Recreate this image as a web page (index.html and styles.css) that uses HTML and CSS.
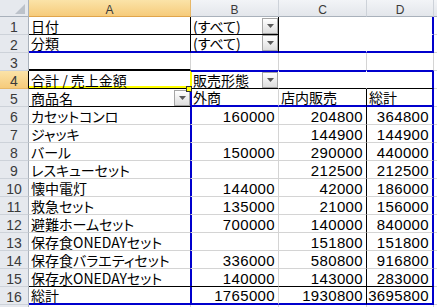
FILE: index.html
```html
<!DOCTYPE html>
<html lang="ja">
<head>
<meta charset="utf-8">
<title>ピボットテーブル</title>
<link rel="stylesheet" href="styles.css">
</head>
<body>
<div class="sheet">
  <div class="corner"><svg width="10" height="10" viewBox="0 0 10 10"><polygon points="10,0 10,10 0,10" fill="#bcc2ca"/></svg></div>
  <div class="ch sel">A</div><div class="ch">B</div><div class="ch">C</div><div class="ch">D</div><div class="ch"></div>

  <div class="rh">1</div>
  <div class="c kb kr">日付</div>
  <div class="c kb kr ddc">(すべて)<span class="dd"><svg width="7" height="4" viewBox="0 0 7 4"><polygon points="0,0 7,0 3.5,4" fill="#5a5a5a"/></svg></span></div>
  <div class="c wb wr"></div><div class="c wb br"></div><div class="c"></div>

  <div class="rh">2</div>
  <div class="c bb kr">分類</div>
  <div class="c bb kr ddc">(すべて)<span class="dd"><svg width="7" height="4" viewBox="0 0 7 4"><polygon points="0,0 7,0 3.5,4" fill="#5a5a5a"/></svg></span></div>
  <div class="c bb wr"></div><div class="c bb br"></div><div class="c"></div>

  <div class="rh">3</div>
  <div class="c kb2"></div><div class="c bb1"></div><div class="c bb1"></div><div class="c bb1"></div><div class="c"></div>

  <div class="rh sel">4</div>
  <div class="c act">合計 / 売上金額<span class="handle"></span></div>
  <div class="c kb wr it ily ddc">販売形態<span class="dd"><svg width="7" height="4" viewBox="0 0 7 4"><polygon points="0,0 7,0 3.5,4" fill="#5a5a5a"/></svg></span></div>
  <div class="c kb wr it"></div><div class="c kb br it"></div><div class="c"></div>

  <div class="rh">5</div>
  <div class="c kb br1 ddc">商品名<span class="dd"><svg width="7" height="4" viewBox="0 0 7 4"><polygon points="0,0 7,0 3.5,4" fill="#5a5a5a"/></svg></span></div>
  <div class="c bb il">外商</div><div class="c bb kr">店内販売</div><div class="c bb br">総計</div><div class="c"></div>

  <div class="rh">6</div>
  <div class="c br1">カセットコンロ</div><div class="c num il">160000</div><div class="c num kr">204800</div><div class="c num br">364800</div><div class="c"></div>
  <div class="rh">7</div>
  <div class="c br1">ジャッキ</div><div class="c num il"></div><div class="c num kr">144900</div><div class="c num br">144900</div><div class="c"></div>
  <div class="rh">8</div>
  <div class="c br1">バール</div><div class="c num il">150000</div><div class="c num kr">290000</div><div class="c num br">440000</div><div class="c"></div>
  <div class="rh">9</div>
  <div class="c br1">レスキューセット</div><div class="c num il"></div><div class="c num kr">212500</div><div class="c num br">212500</div><div class="c"></div>
  <div class="rh">10</div>
  <div class="c br1">懐中電灯</div><div class="c num il">144000</div><div class="c num kr">42000</div><div class="c num br">186000</div><div class="c"></div>
  <div class="rh">11</div>
  <div class="c br1">救急セット</div><div class="c num il">135000</div><div class="c num kr">21000</div><div class="c num br">156000</div><div class="c"></div>
  <div class="rh">12</div>
  <div class="c br1">避難ホームセット</div><div class="c num il">700000</div><div class="c num kr">140000</div><div class="c num br">840000</div><div class="c"></div>
  <div class="rh">13</div>
  <div class="c br1">保存食ONEDAYセット</div><div class="c num il"></div><div class="c num kr">151800</div><div class="c num br">151800</div><div class="c"></div>
  <div class="rh">14</div>
  <div class="c br1">保存食バラエティセット</div><div class="c num il">336000</div><div class="c num kr">580800</div><div class="c num br">916800</div><div class="c"></div>
  <div class="rh">15</div>
  <div class="c br1 kb">保存水ONEDAYセット</div><div class="c num il kb">140000</div><div class="c num kr kb">143000</div><div class="c num br kb">283000</div><div class="c"></div>
  <div class="rh">16</div>
  <div class="c br1 bb">総計</div><div class="c num il bb">1765000</div><div class="c num kr bb">1930800</div><div class="c num br bb">3695800</div><div class="c"></div>
  <div class="rh"></div>
  <div class="c"></div><div class="c"></div><div class="c"></div><div class="c"></div><div class="c"></div>
</div>
</body>
</html>
```
FILE: styles.css
```css
html, body {
  margin: 0;
  padding: 0;
  background: #fff;
  overflow: hidden;
}

body {
  font-family: "Noto Sans CJK JP", "Noto Sans", sans-serif;
  color: #000;
}

.sheet {
  width: 437px;
  height: 307px;
  overflow: hidden;
  display: grid;
  grid-template-columns: 29px 162px 88px 88px 67px 88px;
  grid-template-rows: 17px repeat(17, 18px);
}

/* headers */
.corner {
  box-sizing: border-box;
  background: #e6e9ee;
  border-right: 1px solid #a9b1bb;
  border-bottom: 1px solid #a9b1bb;
  display: flex;
  justify-content: flex-end;
  align-items: flex-end;
  padding: 0 3px 2px 0;
}

.corner svg {
  display: block;
}

.ch {
  box-sizing: border-box;
  background: linear-gradient(#f2f4f7, #e3e6eb);
  border-right: 1px solid #cdd2d9;
  border-bottom: 1px solid #a9b1bb;
  color: #3a3a3a;
  font-family: "Liberation Sans", sans-serif;
  font-size: 12px;
  line-height: 12px;
  padding-top: 4px;
  display: flex;
  justify-content: center;
  align-items: flex-start;
}

.ch.sel {
  background: linear-gradient(#fbe3a8, #f6cb7b);
  border-bottom-color: #e0a54c;
  border-right-color: #e7b767;
}

.rh {
  box-sizing: border-box;
  background: #e6e9ee;
  border-right: 1px solid #a9b1bb;
  border-bottom: 1px solid #cdd2d9;
  color: #3a3a3a;
  font-family: "Liberation Sans", sans-serif;
  font-size: 14px;
  line-height: 12px;
  padding-bottom: 1px;
  display: flex;
  justify-content: center;
  align-items: flex-end;
}

.rh.sel {
  background: linear-gradient(#fbe3a8, #f6cb7b);
  border-right-color: #000;
  border-bottom-color: #e7b767;
}

/* cells */
.c {
  --st: 0 0 0 transparent;
  --sl: 0 0 0 transparent;
  --sb: 0 0 0 transparent;
  box-sizing: border-box;
  position: relative;
  border-right: 1px solid #d4d4d4;
  border-bottom: 1px solid #d4d4d4;
  box-shadow: var(--st), var(--sl), var(--sb);
  display: flex;
  align-items: flex-end;
  padding: 0 2px;
  font-size: 14px;
  line-height: 15px;
  white-space: nowrap;
  font-feature-settings: "palt" 1;
}

.num {
  justify-content: flex-end;
  padding: 0 3px 1px 2px;
  font-family: "Liberation Sans", sans-serif;
  font-size: 15px;
  line-height: 12px;
  letter-spacing: 0.35px;
}

.ddc {
  padding-right: 0;
}

.dd {
  flex: none;
  margin-left: auto;
  width: 16px;
  height: 16px;
  box-sizing: border-box;
  border: 1px solid #a6a6a6;
  background: linear-gradient(#ffffff, #dedede);
  display: flex;
  align-items: center;
  justify-content: center;
}

.dd svg {
  display: block;
}

/* border variants */
.kb { border-bottom-color: #000; }
.kr { border-right-color: #000; }
.wb { border-bottom-color: #fff; }
.wr { border-right-color: #fff; }
.kb2 { border-bottom: 2px solid #000; }
.bb { border-bottom: 2px solid #0000cd; }
.bb1 { border-bottom-color: #0000cd; }
.br { border-right: 2px solid #0000cd; }
.br1 { border-right-color: #0000cd; }
.it { --st: inset 0 1px 0 #0000cd; }
.il { --sl: inset 1px 0 0 #0000cd; }
.ily { --sl: inset 1px 0 0 #ffff00; }

/* active cell */
.act {
  border-right-color: #ffff00;
  border-bottom-color: #000;
  --sb: inset 0 -2px 0 #ffff00;
}

.handle {
  position: absolute;
  right: -2px;
  bottom: -4px;
  width: 6px;
  height: 6px;
  box-sizing: border-box;
  background: #ffff00;
  border: 1px solid #333;
  z-index: 2;
}
```
